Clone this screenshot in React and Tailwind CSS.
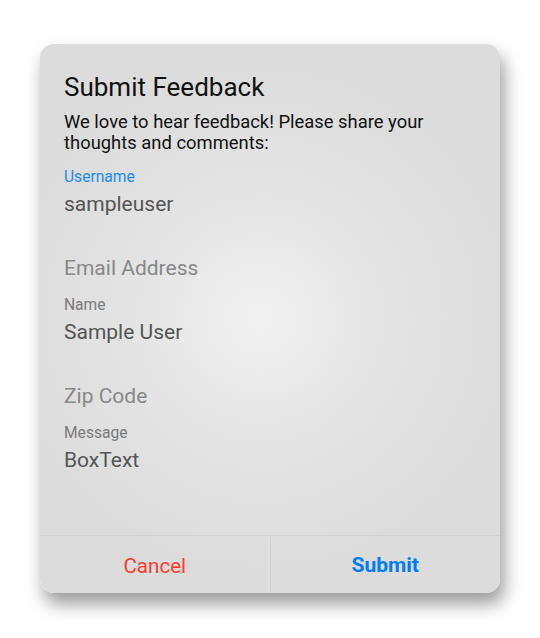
export default function App() {
    const fields = [
        { label: 'Username', value: 'sampleuser', active: true },
        { label: '', value: 'Email Address', placeholder: true },
        { label: 'Name', value: 'Sample User' },
        { label: '', value: 'Zip Code', placeholder: true },
        { label: 'Message', value: 'BoxText' },
    ];

    return (
        <div className="min-h-[638px] bg-white pt-[44px] pl-[40px] font-['Roboto',sans-serif]">
            {/* Dialog card */}
            <div className="flex h-[549px] w-[460px] flex-col overflow-hidden rounded-[14px] bg-[radial-gradient(circle_at_48%_50%,#f1f1f1_0%,#e4e4e4_35%,#dcdcdc_70%)] shadow-[4px_11px_18px_rgba(0,0,0,0.4)]">
                <div className="flex-1 px-6 pt-[28px]">
                    <h1 className="text-[26px] leading-[30px] text-[#111]">Submit Feedback</h1>
                    <p className="mt-[9px] text-[18.4px] leading-[21px] text-[#111]">
                        We love to hear feedback! Please share your thoughts and comments:
                    </p>

                    <div className="mt-[15px]">
                        {fields.map((f, i) => (
                            <div key={i} className="h-[64px]">
                                <div
                                    className={
                                        f.active
                                            ? 'h-[18px] text-[15.6px] leading-[18px] text-[#1a8cf5]'
                                            : 'h-[18px] text-[15.6px] leading-[18px] text-[#7a7a7a]'
                                    }
                                >
                                    {f.label}
                                </div>
                                <div
                                    className={
                                        f.placeholder
                                            ? 'mt-[6px] text-[21px] leading-[24px] text-[#888888]'
                                            : 'mt-[6px] text-[21px] leading-[24px] text-[#555555]'
                                    }
                                >
                                    {f.value}
                                </div>
                            </div>
                        ))}
                    </div>
                </div>

                {/* Buttons */}
                <div className="flex h-[58px] border-t border-[#d2d2d2]">
                    <button className="flex-1 pt-[3px] text-[20.6px] text-[#ff3b30]">Cancel</button>
                    <div className="w-px bg-[#d2d2d2]" />
                    <button className="flex-1 pt-[3px] text-[21px] font-bold text-[#007aff]">Submit</button>
                </div>
            </div>
        </div>
    );
}
